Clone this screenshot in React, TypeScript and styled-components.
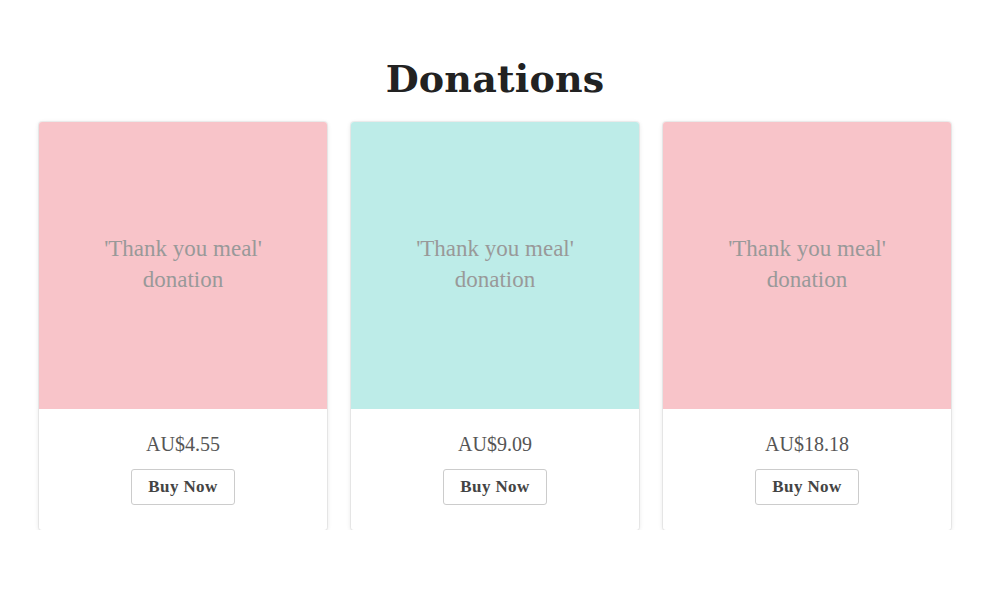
import React from "react";
import styled, { createGlobalStyle } from "styled-components";

const Global = createGlobalStyle`
  html, body { margin: 0; padding: 0; background: #fff; }
  body { font-family: "Liberation Serif", "DejaVu Serif", serif; }
`;

const Page = styled.main`
  width: 988px;
  padding: 53px 37px 0 39px;
  box-sizing: border-box;
`;

const Title = styled.h1`
  margin: 0 0 17px;
  text-align: center;
  font-family: "DejaVu Serif", serif;
  font-weight: bold;
  font-size: 38px;
  line-height: 52px;
  color: #222;
  letter-spacing: 0.2px;
`;

const Grid = styled.div`
  display: grid;
  grid-template-columns: repeat(3, 288px);
  column-gap: 24px;
`;

const Card = styled.div`
  background: #fff;
  border-radius: 3px;
  box-shadow: 0 0 0 1px rgba(0, 0, 0, 0.05), 0 1px 5px rgba(0, 0, 0, 0.12);
  overflow: hidden;
  display: flex;
  flex-direction: column;
`;

const Art = styled.div<{ $bg: string }>`
  height: 287px;
  box-sizing: border-box;
  background: ${(p) => p.$bg};
  display: flex;
  align-items: center;
  justify-content: center;
  text-align: center;
  color: #999;
  font-size: 23px;
  line-height: 31px;
  padding: 0 40px 4px;
`;

const Body = styled.div`
  display: flex;
  flex-direction: column;
  align-items: center;
  padding: 22px 0 25px;
`;

const Price = styled.div`
  font-size: 20px;
  line-height: 26px;
  color: #555;
`;

const BuyButton = styled.button`
  margin-top: 12px;
  width: 104px;
  height: 36px;
  border: 1px solid #ccc;
  border-radius: 3px;
  background: #fff;
  font-family: "Liberation Serif", serif;
  font-weight: bold;
  font-size: 17px;
  color: #444;
  letter-spacing: 0.4px;
  cursor: pointer;
`;

const items = [
  { bg: "#f8c4c9", price: "AU$4.55" },
  { bg: "#bdece8", price: "AU$9.09" },
  { bg: "#f8c4c9", price: "AU$18.18" },
];

export default function App() {
  return (
    <>
      <Global />
      <Page>
        <Title>Donations</Title>
        <Grid>
          {items.map((it, i) => (
            <Card key={i}>
              <Art $bg={it.bg}>'Thank you meal' donation</Art>
              <Body>
                <Price>{it.price}</Price>
                <BuyButton>Buy Now</BuyButton>
              </Body>
            </Card>
          ))}
        </Grid>
      </Page>
    </>
  );
}
